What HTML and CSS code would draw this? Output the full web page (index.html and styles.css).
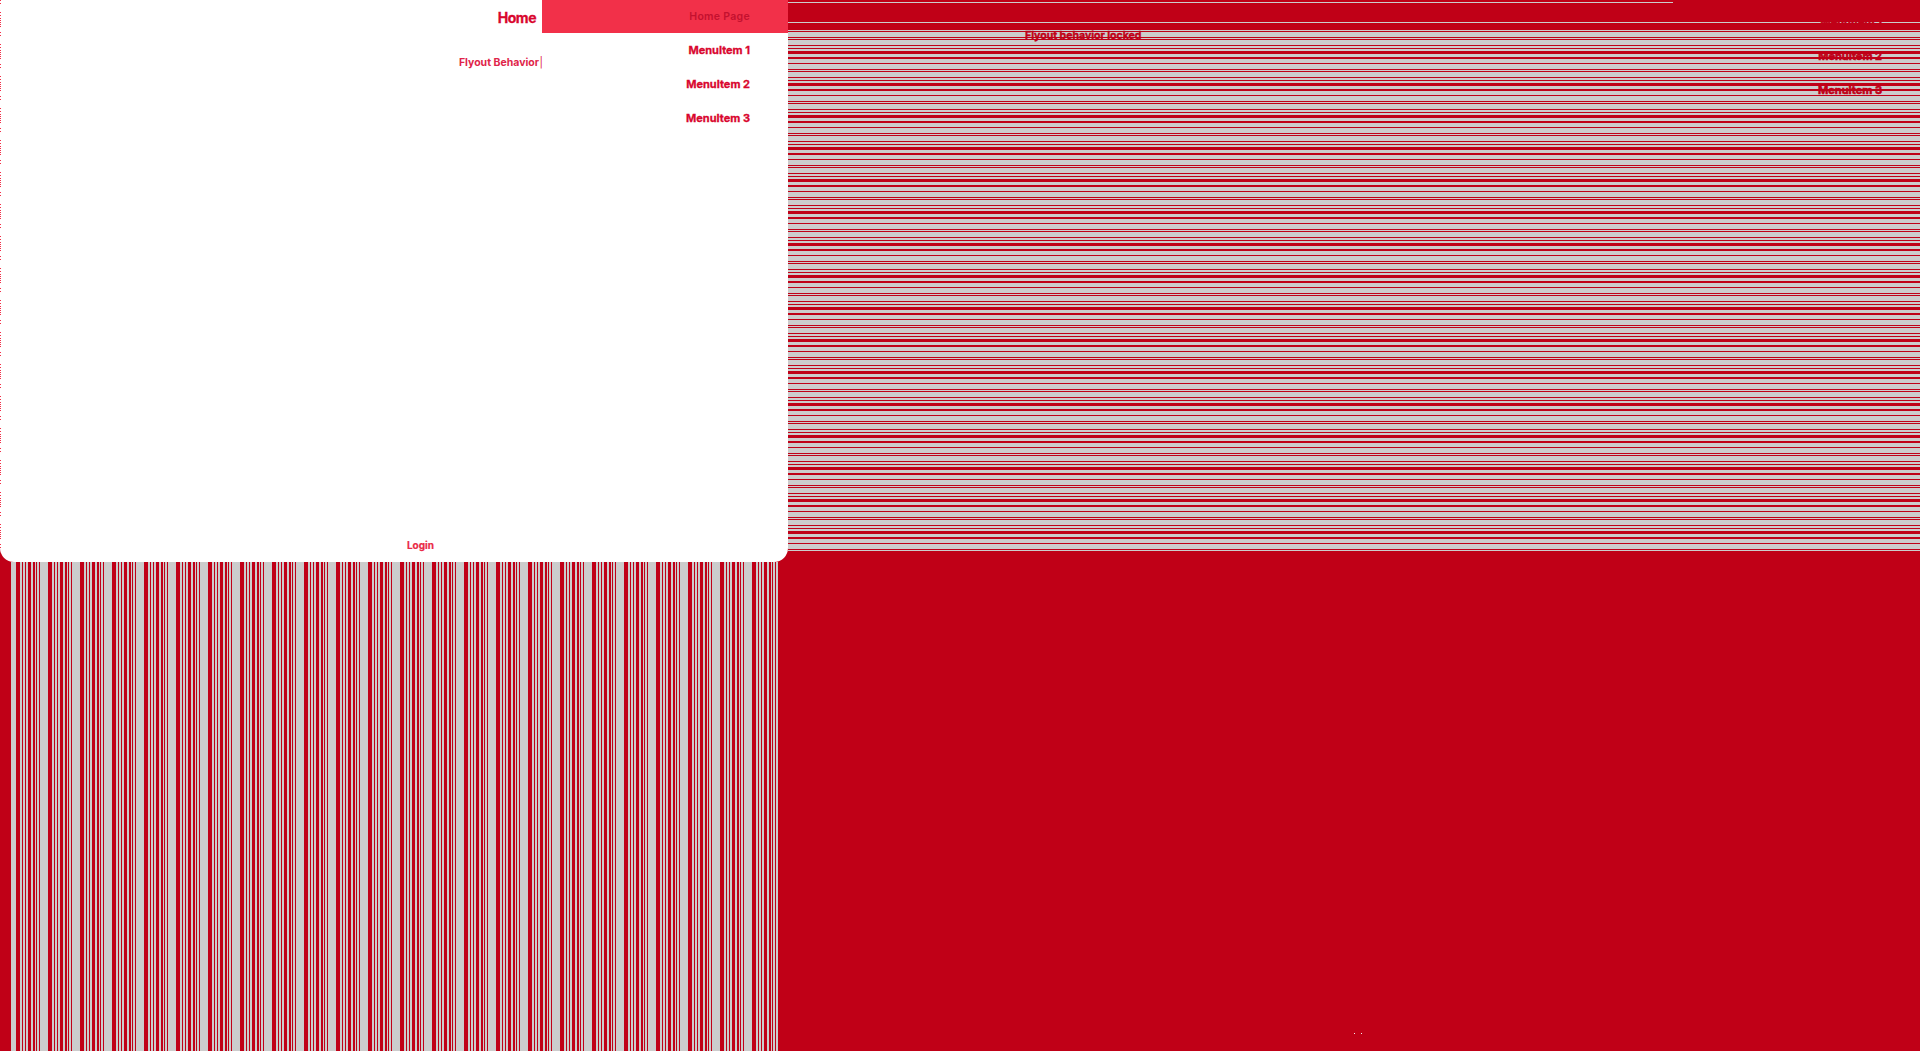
FILE: index.html
```html
<!DOCTYPE html>
<html lang="en">
<head>
    <meta charset="UTF-8">
    <meta name="viewport" content="width=device-width, initial-scale=1.0">
    <title>Home Page</title>
    <link rel="stylesheet" href="styles.css">
</head>
<body>
    <div class="shell">
        <aside class="flyout">
            <div class="flyout-side">
                <div class="flyout-title">Home</div>
                <div class="flyout-label">Flyout Behavior <span class="flyout-bar">|</span></div>
                <div class="flyout-login">Login</div>
            </div>
            <nav class="flyout-menu">
                <a class="menu-link active">Home Page</a>
                <a class="menu-link">MenuItem 1</a>
                <a class="menu-link">MenuItem 2</a>
                <a class="menu-link">MenuItem 3</a>
            </nav>
        </aside>

        <main class="content">
            <div class="content-band">
                <div class="band-line band-line-short"></div>
                <div class="band-line band-line-full"></div>
            </div>
            <p class="locked-note">Flyout behavior locked</p>
            <nav class="content-menu">
                <a class="content-link">MenuItem 1</a>
                <a class="content-link">MenuItem 2</a>
                <a class="content-link">MenuItem 3</a>
            </nav>
        </main>

        <div class="detail-stripes"></div>

        <div class="corner">
            <span class="dot"></span>
            <span class="dot"></span>
        </div>
    </div>
</body>
</html>
```

FILE: styles.css
```css
* {
    margin: 0;
    padding: 0;
    box-sizing: border-box;
}

body {
    font-family: Inter, 'Liberation Sans', sans-serif;
    background: #c00017;
    height: 100vh;
    overflow: hidden;
}

.shell {
    display: grid;
    grid-template-columns: 788px 1fr;
    grid-template-rows: 562px 1fr;
    height: 100%;
}

/* Flyout panel */
.flyout {
    position: relative;
    display: flex;
    background: #ffffff;
    border-radius: 0 0 14px 14px;
    overflow: hidden;
}

.flyout::before {
    content: '';
    position: absolute;
    left: 0;
    top: 0;
    bottom: 0;
    width: 1px;
    background: repeating-linear-gradient(180deg,
        #f23049 0, #f23049 1px,
        transparent 1px, transparent 3px,
        #f23049 3px, #f23049 4px,
        transparent 4px, transparent 12px,
        #f23049 12px, #f23049 13px,
        transparent 13px, transparent 15px,
        #f23049 15px, #f23049 16px,
        transparent 16px, transparent 18px,
        #f23049 18px, #f23049 19px,
        transparent 19px, transparent 20px,
        #f23049 20px, #f23049 21px,
        transparent 21px, transparent 22px,
        #f23049 22px, #f23049 23px,
        transparent 23px, transparent 24px,
        #f23049 24px, #f23049 25px,
        transparent 25px, transparent 26px,
        #f23049 26px, #f23049 27px,
        transparent 27px, transparent 32px);
}

.flyout-side {
    width: 542px;
    display: flex;
    flex-direction: column;
    align-items: flex-end;
    color: #d9062e;
    font-weight: 700;
}

.flyout-title {
    height: 33px;
    line-height: 36px;
    padding-right: 6px;
    font-size: 14px;
    letter-spacing: -0.5px;
    -webkit-text-stroke: 0.3px #d9062e;
}

.flyout-label {
    margin-top: 22px;
    margin-right: -1px;
    font-size: 10.5px;
    line-height: 16px;
    color: #e0244a;
    font-weight: 700;
}

.flyout-bar {
    font-weight: 400;
    margin-left: -2px;
}

.flyout-login {
    margin-top: auto;
    margin-bottom: 10px;
    margin-right: 108px;
    font-size: 10px;
    line-height: 14px;
    color: #ea2a46;
    -webkit-text-stroke: 0.2px #ea2a46;
}

.flyout-menu {
    flex: 1;
    display: flex;
    flex-direction: column;
}

.menu-link {
    height: 34px;
    line-height: 34px;
    padding-right: 38px;
    text-align: right;
    font-size: 11px;
    font-weight: 700;
    color: #d9062e;
    -webkit-text-stroke: 0.3px #d9062e;
}

.menu-link.active {
    height: 33px;
    line-height: 33px;
    background: #f23049;
    color: #c4112f;
    font-size: 10.5px;
    font-weight: 600;
    letter-spacing: 0.3px;
    -webkit-text-stroke: 0;
}

/* Main area */
.content {
    position: relative;
    height: 551px;
    background: repeating-linear-gradient(180deg,
        #cccccc 0, #cccccc 1px,
        #c00017 1px, #c00017 2px,
        #cccccc 2px, #cccccc 7px,
        #c00017 7px, #c00017 8px,
        #cccccc 8px, #cccccc 9px,
        #c00017 9px, #c00017 10px,
        #cccccc 10px, #cccccc 15px,
        #c00017 15px, #c00017 16px,
        #cccccc 16px, #cccccc 18px,
        #c00017 18px, #c00017 19px,
        #cccccc 19px, #cccccc 21px,
        #c00017 21px, #c00017 24px,
        #cccccc 24px, #cccccc 27px,
        #c00017 27px, #c00017 29px,
        #cccccc 29px, #cccccc 32px);
    background-position: 0 30px;
    background-repeat: no-repeat;
    background-size: 100% 521px;
}

.content-band {
    height: 30px;
    background: #c00017;
    padding-top: 2px;
}

.band-line {
    height: 1px;
    background: #cccccc;
}

.band-line-short {
    width: 885px;
}

.band-line-full {
    margin-top: 19px;
}

.locked-note {
    position: absolute;
    left: 237px;
    top: 28px;
    font-size: 10.5px;
    line-height: 16px;
    font-weight: 700;
    color: #c00017;
    -webkit-text-stroke: 0.4px #c00017;
}

.content-menu {
    position: absolute;
    right: 38px;
    top: 5px;
    display: flex;
    flex-direction: column;
    align-items: flex-end;
}

.content-link {
    height: 34px;
    line-height: 34px;
    font-size: 11px;
    font-weight: 700;
    color: #c00017;
    -webkit-text-stroke: 0.6px #c00017;
}

/* Lower left */
.detail-stripes {
    margin-left: 11px;
    margin-right: 10px;
    background: repeating-linear-gradient(90deg,
        #cccccc 0, #cccccc 5px,
        #c00017 5px, #c00017 9px,
        #cccccc 9px, #cccccc 11px,
        #c00017 11px, #c00017 12px,
        #cccccc 12px, #cccccc 14px,
        #c00017 14px, #c00017 15px,
        #cccccc 15px, #cccccc 17px,
        #c00017 17px, #c00017 20px,
        #cccccc 20px, #cccccc 22px,
        #c00017 22px, #c00017 24px,
        #cccccc 24px, #cccccc 25px,
        #c00017 25px, #c00017 26px,
        #cccccc 26px, #cccccc 28px,
        #c00017 28px, #c00017 29px,
        #cccccc 29px, #cccccc 32px);
}

.corner {
    display: flex;
    gap: 6px;
    padding: 471px 0 0 566px;
}

.dot {
    width: 1px;
    height: 1px;
    background: #eeeeee;
}
```
